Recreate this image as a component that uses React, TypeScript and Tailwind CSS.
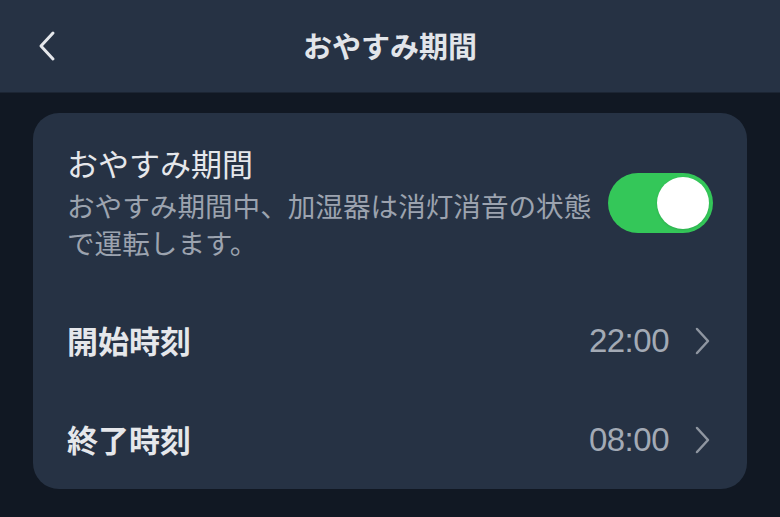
import React, { useState } from 'react';

const font = '"Noto Sans CJK JP", "Noto Sans", sans-serif';

const ChevronLeft: React.FC = () => (
  <svg width="20" height="32" viewBox="0 0 20 32" fill="none">
    <path d="M16 3 L4 16 L16 29" stroke="#e5e7eb" strokeWidth="3" strokeLinecap="round" strokeLinejoin="round" />
  </svg>
);

const ChevronRight: React.FC = () => (
  <svg width="18" height="28" viewBox="0 0 18 28" fill="none">
    <path d="M3 2 L14 14 L3 26" stroke="#8f96a1" strokeWidth="2.5" strokeLinecap="round" strokeLinejoin="round" />
  </svg>
);

const TimeRow: React.FC<{ label: string; value: string }> = ({ label, value }) => (
  <button className="w-full h-[99px] flex items-center text-left">
    <span className="flex-grow text-[31px] font-bold text-[#e5e7eb]">{label}</span>
    <span className="text-[33px] text-[#a3aab5] tracking-[-0.5px]" style={{ fontFamily: '"Liberation Sans", Arial, sans-serif' }}>
      {value}
    </span>
    <span className="ml-[25px] mr-[1px] flex items-center">
      <ChevronRight />
    </span>
  </button>
);

const App: React.FC = () => {
  const [on, setOn] = useState(true);

  return (
    <div className="w-[780px] h-[517px] bg-[#111823] overflow-hidden" style={{ fontFamily: font }}>
      <header className="h-[93px] bg-[#263244] border-b border-[#1c2533] flex items-center px-[37px] relative">
        <button className="flex items-center">
          <ChevronLeft />
        </button>
        <h1 className="absolute left-0 right-0 text-center text-[29px] font-bold text-[#e2e5ea] pointer-events-none">
          おやすみ期間
        </h1>
      </header>

      <div className="px-[33px] pt-[20px]">
        <div className="rounded-[26px] bg-[#263244] pl-[34px] pr-[34px]">
          <div className="flex items-center pt-[32px] pb-[30px]">
            <div className="flex-grow">
              <div className="text-[31px] leading-[36px] text-[#e5e7eb]">おやすみ期間</div>
              <p className="text-[27.6px] leading-[37px] text-[#9ca3af] w-[535px] mt-[6px]">
                おやすみ期間中、加湿器は消灯消音の状態で運転します。
              </p>
            </div>
            <button
              onClick={() => setOn(!on)}
              className={`w-[105px] h-[60px] rounded-full flex items-center px-[4px] ${on ? 'bg-[#34c759] justify-end' : 'bg-gray-600 justify-start'}`}
            >
              <span className="w-[52px] h-[52px] rounded-full bg-white shadow" />
            </button>
          </div>
          <TimeRow label="開始時刻" value="22:00" />
          <TimeRow label="終了時刻" value="08:00" />
        </div>
      </div>
    </div>
  );
};

export default App;
